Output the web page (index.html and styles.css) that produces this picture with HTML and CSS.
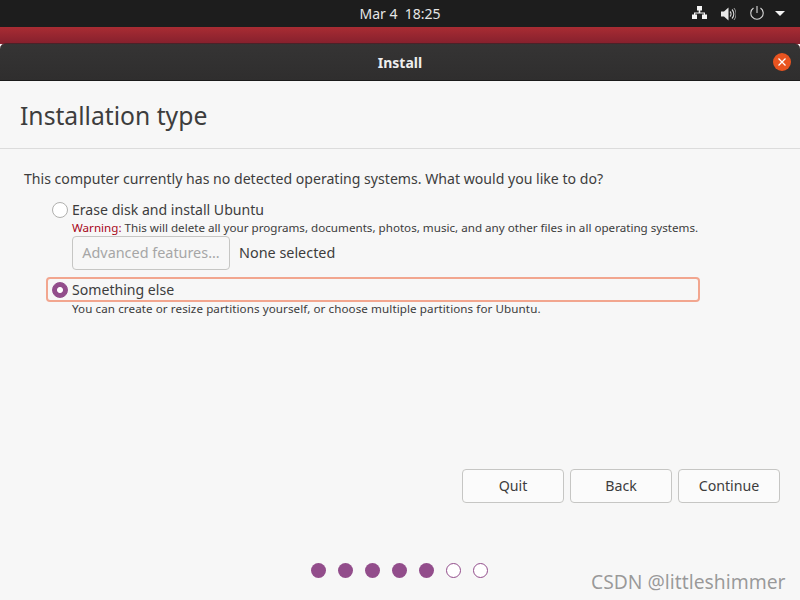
FILE: index.html
```html
<!DOCTYPE html>
<html lang="en">
<head>
<meta charset="utf-8">
<title>Install</title>
<link rel="stylesheet" href="styles.css">
</head>
<body>
<div class="topbar">
  <div class="clock">Mar 4&nbsp;&nbsp;18:25</div>
  <div class="status">
    <svg class="ic-net" width="15" height="13" viewBox="0 0 15 13"><path fill="#f4f4f4" d="M5 0h5v4.500h-1.700v2h4.700v2h2v4.500h-5v-4.500h1.800v-.9h-8.600v.9h1.800v4.500h-5v-4.500h2v-2h4.700v-2h-1.700z"/></svg>
    <svg class="ic-vol" width="15" height="14" viewBox="0 0 15 14"><path fill="#e8e8e8" d="M0 4.500h3l4.500-4v13l-4.500-4h-3z"/><path fill="none" stroke="#d8d8d8" stroke-width="1.100" d="M9 4.500a3.500 3.500 0 0 1 0 5M11 2.500a6.500 6.500 0 0 1 0 9"/><path fill="none" stroke="#999" stroke-width="1" d="M13 1a9.500 9.500 0 0 1 0 12"/></svg>
    <svg class="ic-pow" width="14" height="14" viewBox="0 0 14 14"><path fill="none" stroke="#d8d8d8" stroke-width="1.100" d="M7 0v7M3.500 2a6.200 6.200 0 1 0 7 0"/></svg>
    <svg class="ic-arr" width="10" height="5" viewBox="0 0 10 5"><path fill="#f2f2f2" d="M0 0h10l-5 5z"/></svg>
  </div>
</div>
<div class="wallpaper"></div>
<div class="titlebar">
  <span class="title">Install</span>
  <span class="close"><svg width="8" height="8" viewBox="0 0 8 8"><path stroke="#fff" stroke-width="1.300" d="M0.500 0.500l7 7M7.500 0.500l-7 7"/></svg></span>
</div>
<main class="window">
  <header class="page-head"><h1>Installation type</h1></header>
  <section class="content">
    <p class="question">This computer currently has no detected operating systems. What would you like to do?</p>
    <div class="option first">
      <span class="radio"></span><span class="label">Erase disk and install Ubuntu</span>
    </div>
    <p class="desc"><span class="warn">Warning:</span> This will delete all your programs, documents, photos, music, and any other files in all operating systems.</p>
    <div class="adv">
      <span class="btn disabled">Advanced features...</span>
      <span class="none">None selected</span>
    </div>
    <div class="option focused">
      <span class="radio on"></span><span class="label">Something else</span>
    </div>
    <p class="desc wide">You can create or resize partitions yourself, or choose multiple partitions for Ubuntu.</p>
  </section>
  <div class="actions">
    <span class="btn act">Quit</span>
    <span class="btn act">Back</span>
    <span class="btn act">Continue</span>
  </div>
  <div class="dots">
    <i class="dot"></i><i class="dot"></i><i class="dot"></i><i class="dot"></i><i class="dot"></i><i class="dot open"></i><i class="dot open"></i>
  </div>
</main>
<div class="watermark">CSDN @littleshimmer</div>
</body>
</html>
```

FILE: styles.css
```css
* { box-sizing: border-box; }
html, body { margin: 0; padding: 0; }
body {
  width: 800px;
  height: 600px;
  overflow: hidden;
  display: flex;
  flex-direction: column;
  position: relative;
  background: #f7f7f7;
  font-family: "Noto Sans", "Open Sans", sans-serif;
  color: #3d3d3d;
}
.topbar {
  height: 27px;
  flex: none;
  background: #1d1d1d;
  display: flex;
  align-items: center;
  justify-content: center;
  position: relative;
}
.clock { color: #e6e6e6; font-size: 14px; margin-top: -1px; }
.status {
  position: absolute;
  right: 15px;
  top: 6px;
  display: flex;
  align-items: flex-start;
}
.status svg { display: block; }
.ic-vol { margin: 1px 0 0 14px; }
.ic-pow { margin-left: 14px; }
.ic-arr { margin: 5px 0 0 11px; }
.wallpaper {
  height: 17px;
  flex: none;
  background: linear-gradient(#a92c33, #84202d);
}
.titlebar {
  height: 38px;
  flex: none;
  margin-top: -1px;
  background: linear-gradient(#353434, #2f2e2e);
  border-top: 1px solid #4a2228;
  border-bottom: 1px solid #1b1b1b;
  border-radius: 6px 6px 0 0;
  display: flex;
  align-items: center;
  justify-content: center;
  position: relative;
}
.title { color: #eeeeee; font-weight: 700; font-size: 14px; }
.close {
  position: absolute;
  right: 9px;
  top: 9px;
  width: 18px;
  height: 18px;
  border-radius: 50%;
  background: #e95420;
  display: flex;
  align-items: center;
  justify-content: center;
}
.window { flex: 1; display: flex; flex-direction: column; background: #f7f7f7; }
.page-head {
  height: 68px;
  flex: none;
  border-bottom: 1px solid #dcdcdc;
  padding: 19px 0 0 20px;
}
h1 { margin: 0; font-weight: 400; font-size: 24.700px; line-height: 32px; color: #3d3d3d; }
.content { padding: 20px 0 0 24px; height: 320px; flex: none; }
.question { margin: 0; font-size: 14.100px; line-height: 19px; }
.option {
  display: flex;
  align-items: center;
  font-size: 14.100px;
}
.option.first { margin: 11px 0 0 28px; height: 21px; }
.option.focused {
  margin: 7px 0 0 22px;
  width: 654px;
  height: 25px;
  padding-left: 6px;
  border: 2px solid #f2a68f;
  border-radius: 4px;
}
.focused .radio { margin-left: -2px; }
.radio {
  width: 16px;
  height: 16px;
  border-radius: 50%;
  border: 1px solid #b0b0ae;
  background: #fff;
  margin-right: 4px;
  flex: none;
}
.radio.on {
  background: radial-gradient(circle, #fff 0 2.500px, #924d8b 3.500px);
  border-color: #924d8b;
}
.desc { margin: 0 0 0 48px; font-size: 11.640px; line-height: 16px; white-space: nowrap; }
.desc.wide { letter-spacing: 0.08px; margin-top: -1px; }
.warn { color: #a8071a; }
.adv { display: flex; align-items: center; margin: 0 0 0 48px; }
.btn {
  display: flex;
  align-items: center;
  justify-content: center;
  background: #fbfbfb;
  border: 1px solid #c6c6c4;
  border-radius: 4px;
  height: 34px;
  padding-bottom: 2px;
  font-size: 14.200px;
}
.btn.disabled { width: 158px; color: #a6a6a6; background: #f7f7f7; font-size: 14.400px; padding-bottom: 2px; }
.none { margin-left: 9px; font-size: 14.400px; padding-bottom: 2px; }
.actions {
  flex: none;
  display: flex;
  justify-content: flex-end;
  gap: 6px;
  padding-right: 20px;
  height: 34px;
}
.btn.act { width: 102px; }
.dots {
  flex: none;
  display: flex;
  justify-content: center;
  gap: 12px;
  margin-top: 60px;
  padding-right: 2px;
}
.dot {
  display: block;
  width: 15px;
  height: 15px;
  border-radius: 50%;
  background: #924d8b;
}
.dot.open { background: #fff; border: 1px solid #924d8b; }
.watermark {
  position: absolute;
  left: 591px;
  top: 570px;
  font-size: 19.300px;
  line-height: 24px;
  color: rgba(90, 90, 90, 0.6);
}
```
